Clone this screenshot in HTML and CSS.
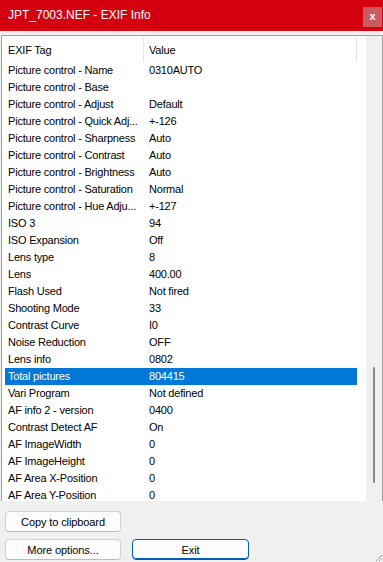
FILE: index.html
```html
<!DOCTYPE html>
<html lang="en">
<head>
    <meta charset="UTF-8">
    <meta name="viewport" content="width=device-width, initial-scale=1.0">
    <title>JPT_7003.NEF - EXIF Info</title>
    <link rel="stylesheet" href="styles.css">
</head>
<body>
    <div class="titlebar">
        <span class="title">JPT_7003.NEF - EXIF Info</span>
        <span class="close">x</span>
    </div>

    <div class="list">
        <div class="list-body">
            <div class="list-header">
                <div class="hcell tag">EXIF Tag</div>
                <div class="hcell value">Value</div>
            </div>
            <div class="rows">
                <div class="row"><span class="tag">Picture control - Name</span><span class="value">0310AUTO</span></div>
                <div class="row"><span class="tag">Picture control - Base</span><span class="value"></span></div>
                <div class="row"><span class="tag">Picture control - Adjust</span><span class="value">Default</span></div>
                <div class="row"><span class="tag">Picture control - Quick Adj...</span><span class="value">+-126</span></div>
                <div class="row"><span class="tag">Picture control - Sharpness</span><span class="value">Auto</span></div>
                <div class="row"><span class="tag">Picture control - Contrast</span><span class="value">Auto</span></div>
                <div class="row"><span class="tag">Picture control - Brightness</span><span class="value">Auto</span></div>
                <div class="row"><span class="tag">Picture control - Saturation</span><span class="value">Normal</span></div>
                <div class="row"><span class="tag">Picture control - Hue Adju...</span><span class="value">+-127</span></div>
                <div class="row"><span class="tag">ISO 3</span><span class="value">94</span></div>
                <div class="row"><span class="tag">ISO Expansion</span><span class="value">Off</span></div>
                <div class="row"><span class="tag">Lens type</span><span class="value">8</span></div>
                <div class="row"><span class="tag">Lens</span><span class="value">400.00</span></div>
                <div class="row"><span class="tag">Flash Used</span><span class="value">Not fired</span></div>
                <div class="row"><span class="tag">Shooting Mode</span><span class="value">33</span></div>
                <div class="row"><span class="tag">Contrast Curve</span><span class="value">I0</span></div>
                <div class="row"><span class="tag">Noise Reduction</span><span class="value">OFF</span></div>
                <div class="row"><span class="tag">Lens info</span><span class="value">0802</span></div>
                <div class="row selected"><span class="tag">Total pictures</span><span class="value">804415</span></div>
                <div class="row"><span class="tag">Vari Program</span><span class="value">Not defined</span></div>
                <div class="row"><span class="tag">AF info 2 - version</span><span class="value">0400</span></div>
                <div class="row"><span class="tag">Contrast Detect AF</span><span class="value">On</span></div>
                <div class="row"><span class="tag">AF ImageWidth</span><span class="value">0</span></div>
                <div class="row"><span class="tag">AF ImageHeight</span><span class="value">0</span></div>
                <div class="row"><span class="tag">AF Area X-Position</span><span class="value">0</span></div>
                <div class="row"><span class="tag">AF Area Y-Position</span><span class="value">0</span></div>
            </div>
        </div>
        <div class="scrollbar"><div class="thumb"></div></div>
    </div>

    <div class="buttons">
        <div class="btn-row">
            <button class="btn">Copy to clipboard</button>
        </div>
        <div class="btn-row">
            <button class="btn">More options...</button>
            <button class="btn default">Exit</button>
        </div>
    </div>

    <svg class="grip" width="9" height="9" viewBox="0 0 9 9">
        <path d="M8 2 L2 8 M8 5 L5 8" stroke="#a0a0a0" stroke-width="1"/>
    </svg>
</body>
</html>
```

FILE: styles.css
```css
html, body {
    margin: 0;
    padding: 0;
}
body {
    position: relative;
    width: 383px;
    height: 562px;
    overflow: hidden;
    background-color: #f0f0f0;
    font-family: "Liberation Sans", Arial, sans-serif;
    font-size: 11px;
    letter-spacing: -0.2px;
    color: #000;
}
.titlebar {
    display: flex;
    justify-content: space-between;
    height: 31px;
    background-color: #d4000f;
    color: #fff;
}
.title {
    padding-left: 8px;
    line-height: 31px;
    font-size: 12px;
    letter-spacing: 0;
}
.close {
    align-self: flex-start;
    margin-top: 7px;
    margin-right: 1px;
    width: 19px;
    height: 20px;
    line-height: 19px;
    text-align: center;
    font-weight: bold;
    font-size: 11px;
    letter-spacing: 0;
    background-color: #cb5a60;
}
.list {
    display: flex;
    margin: 4px 0 0 1px;
    height: 465px;
    border-top: 1px solid #a0a0a0;
    border-left: 1px solid #a0a0a0;
    border-right: 1px solid #a0a0a0;
    overflow: hidden;
}
.list-body {
    width: 364px;
    background-color: #fff;
    overflow: hidden;
}
.list-header {
    display: flex;
    align-items: flex-start;
    height: 26px;
    padding: 2px 0 0 3px;
    box-sizing: border-box;
}
.hcell {
    height: 24px;
    line-height: 24px;
    box-sizing: border-box;
    border-right: 1px solid #e5e5e5;
}
.hcell.tag {
    width: 139px;
    padding-left: 3px;
}
.hcell.value {
    width: 213px;
    padding-left: 5px;
}
.rows {
    margin-left: 3px;
    width: 352px;
}
.row {
    display: flex;
    height: 17px;
    line-height: 17px;
    white-space: nowrap;
}
.row .tag {
    width: 141px;
    padding-left: 3px;
    box-sizing: border-box;
    overflow: hidden;
}
.row .value {
    padding-left: 3px;
}
.row.selected {
    background-color: #0078d7;
    color: #fff;
}
.scrollbar {
    width: 16px;
    background-color: #f0f0f0;
}
.thumb {
    width: 2px;
    height: 116px;
    margin: 331px 0 0 7px;
    background-color: #8a8a8a;
    border-radius: 1px;
}
.buttons {
    display: flex;
    flex-direction: column;
    gap: 7px;
    padding: 10px 0 0 5px;
}
.btn-row {
    display: flex;
    gap: 11px;
}
.btn {
    width: 116px;
    height: 21px;
    padding: 0;
    background-color: #fdfdfd;
    border: 1px solid #d0d0d0;
    border-bottom-color: #bcbcbc;
    border-radius: 4px;
    font-family: "Liberation Sans", Arial, sans-serif;
    font-size: 11px;
    letter-spacing: -0.1px;
    color: #000;
}
.btn.default {
    width: 117px;
    border: 1px solid #005fb8;
    box-shadow: inset 0 -1px 0 #005fb8;
}
.grip {
    position: absolute;
    right: 0;
    bottom: 0;
}
```
